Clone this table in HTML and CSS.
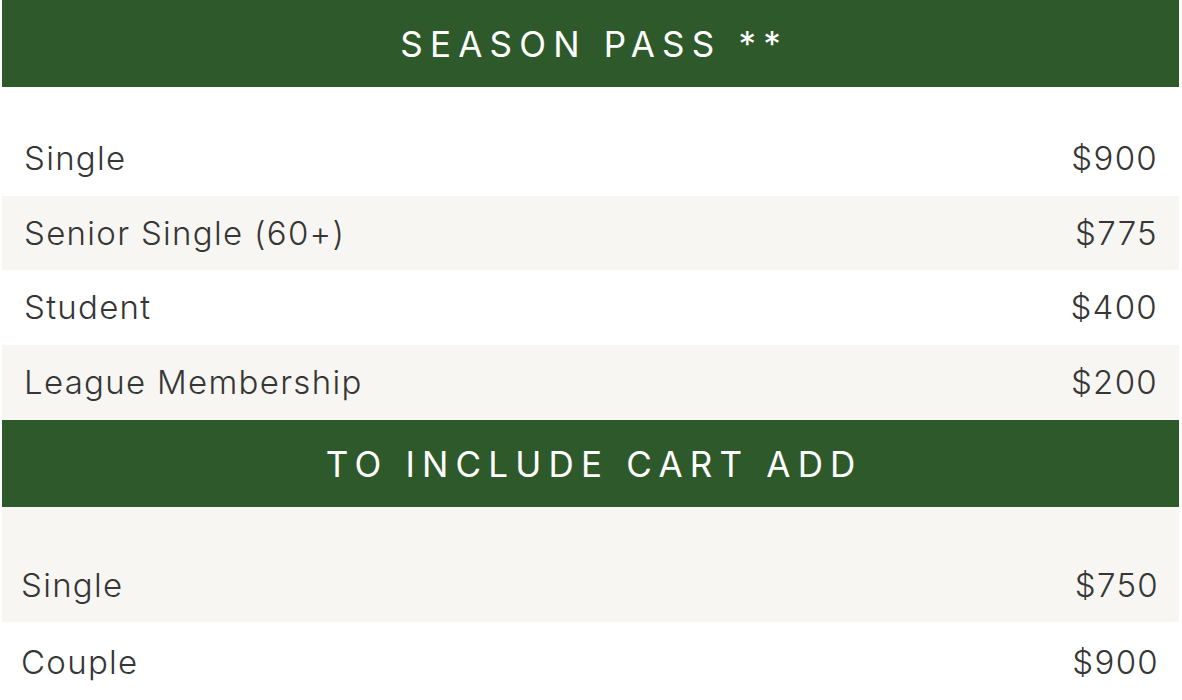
FILE: index.html
```html
<!DOCTYPE html>
<html>
<head>
<meta charset="utf-8">
<link rel="stylesheet" href="styles.css">
</head>
<body>
<div class="pricing">
  <div class="band">SEASON PASS **</div>
  <div class="list first">
    <div class="row top"><span>Single</span><span>$900</span></div>
    <div class="row alt"><span>Senior Single (60+)</span><span>$775</span></div>
    <div class="row"><span>Student</span><span>$400</span></div>
    <div class="row alt"><span>League Membership</span><span>$200</span></div>
  </div>
  <div class="band">TO INCLUDE CART ADD</div>
  <div class="list second">
    <div class="row alt top2"><span>Single</span><span>$750</span></div>
    <div class="row last"><span>Couple</span><span>$900</span></div>
  </div>
</div>
</body>
</html>
```
FILE: styles.css
```css
html, body {
  margin: 0;
  padding: 0;
  background: #ffffff;
}
body {
  font-family: "Inter", "Liberation Sans", sans-serif;
  color: #363636;
}
.pricing {
  padding: 0 3px 0 2px;
}
.band {
  background: #2e5a2b;
  color: #ffffff;
  height: 87px;
  display: flex;
  align-items: center;
  justify-content: center;
  font-size: 35px;
  font-weight: 400;
  letter-spacing: 7.2px;
  padding-left: 7.2px;
}
.list .row {
  display: flex;
  justify-content: space-between;
  align-items: center;
  height: 74.5px;
  font-size: 33px;
  font-weight: 300;
  letter-spacing: 1.3px;
  padding: 0 21px 0 22px;
}
.list.first {
  padding-top: 34px;
}
.list.first .row:last-child {
  height: 75.5px;
}
.list .row.alt {
  background: #f7f6f2;
}
.list.second .row {
  padding: 0 20px 0 19px;
}
.list .row.top2 {
  height: 75px;
  padding-top: 40px;
}
.list .row.last {
  height: 80px;
}
```
